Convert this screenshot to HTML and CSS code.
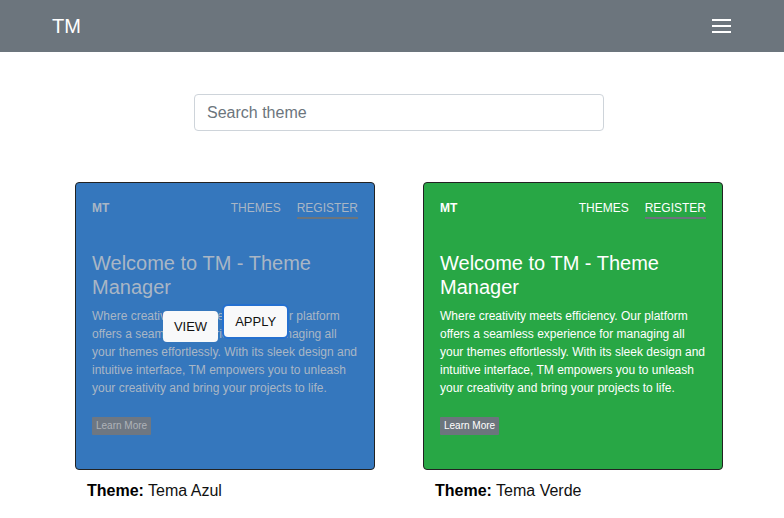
FILE: index.html
```html
<!DOCTYPE html>
<html lang="en">
<head>
<meta charset="utf-8">
<title>TM - Theme Manager</title>
<link rel="stylesheet" href="styles.css">
</head>
<body>
<header class="navbar">
  <a class="brand" href="#">TM</a>
  <button class="toggler" aria-label="Menu">
    <span></span><span></span><span></span>
  </button>
</header>

<main class="main">
  <div class="search-wrap">
    <input class="search" type="text" placeholder="Search theme">
  </div>

  <div class="themes">
    <div class="theme">
      <div class="card card-blue is-hover">
        <nav class="card-nav">
          <span class="card-brand">MT</span>
          <div class="card-links">
            <a href="#">THEMES</a>
            <a href="#" class="active">REGISTER</a>
          </div>
        </nav>
        <h2 class="card-title">Welcome to TM - Theme Manager</h2>
        <p class="card-text">Where creativity meets efficiency. Our platform offers a seamless experience for managing all your themes effortlessly. With its sleek design and intuitive interface, TM empowers you to unleash your creativity and bring your projects to life.</p>
        <a href="#" class="learn">Learn More</a>
        <div class="overlay">
          <button class="ov-btn">VIEW</button>
          <button class="ov-btn ov-focus">APPLY</button>
        </div>
      </div>
      <div class="theme-name"><strong>Theme:</strong> Tema Azul</div>
    </div>

    <div class="theme">
      <div class="card card-green">
        <nav class="card-nav">
          <span class="card-brand">MT</span>
          <div class="card-links">
            <a href="#">THEMES</a>
            <a href="#" class="active">REGISTER</a>
          </div>
        </nav>
        <h2 class="card-title">Welcome to TM - Theme Manager</h2>
        <p class="card-text">Where creativity meets efficiency. Our platform offers a seamless experience for managing all your themes effortlessly. With its sleek design and intuitive interface, TM empowers you to unleash your creativity and bring your projects to life.</p>
        <a href="#" class="learn">Learn More</a>
      </div>
      <div class="theme-name"><strong>Theme:</strong> Tema Verde</div>
    </div>
  </div>
</main>
</body>
</html>
```

FILE: styles.css
```css
* { box-sizing: border-box; }

html, body {
  margin: 0;
  padding: 0;
  background: #fff;
  font-family: "Liberation Sans", Arial, sans-serif;
  color: #212529;
}

.navbar {
  height: 52px;
  background: #6c757d;
  display: flex;
  align-items: center;
  justify-content: space-between;
  padding: 0 52px 0 52px;
}

.brand {
  color: #fff;
  text-decoration: none;
  font-size: 20px;
  line-height: 24px;
  margin-top: 0;
}

.toggler {
  background: none;
  border: 0;
  padding: 0;
  width: 20px;
  height: 14px;
  display: flex;
  flex-direction: column;
  justify-content: space-between;
  margin-top: 0;
}

.toggler span {
  display: block;
  width: 19px;
  height: 2px;
  background: #fff;
}

.main {
  width: 648px;
  margin-left: 75px;
  padding-top: 42px;
}

.search-wrap {
  padding-left: 119px;
}

.search {
  display: block;
  width: 410px;
  height: 37px;
  border: 1px solid #ced4da;
  border-radius: 4px;
  padding: 0 12px;
  font-family: "Liberation Sans", Arial, sans-serif;
  font-size: 16px;
  color: #495057;
  outline: none;
}

.search::placeholder {
  color: #6c757d;
}

.themes {
  display: flex;
  gap: 48px;
  margin-top: 51px;
}

.theme {
  width: 300px;
}

.card {
  position: relative;
  height: 288px;
  border: 1px solid #222;
  border-radius: 4px;
  padding: 16px 16px 0 16px;
  color: #fff;
}

.card-blue { background: #3577bd; }
.card-green { background: #28a745; }

.card-nav {
  display: flex;
  justify-content: space-between;
  align-items: flex-start;
  font-size: 12px;
  line-height: 18px;
}

.card-brand {
  font-weight: bold;
}

.card-links {
  display: flex;
  gap: 16px;
}

.card-links a {
  color: inherit;
  text-decoration: none;
}

.card-links a.active {
  border-bottom: 2px solid #6c757d;
}

.card-title {
  margin: 32px 0 0 0;
  font-size: 20px;
  line-height: 24px;
  font-weight: normal;
}

.card-text {
  margin: 8px 0 0 0;
  font-size: 12px;
  line-height: 18px;
}

.learn {
  display: inline-block;
  margin-top: 20px;
  background: #6c757d;
  color: #fff;
  font-size: 10px;
  line-height: 18px;
  padding: 0 4px;
  text-decoration: none;
  border-radius: 1px;
}

.is-hover .card-nav,
.is-hover .card-title,
.is-hover .card-text {
  color: #a9b6c5;
}

.is-hover .learn {
  color: #aeb3b9;
  background: #6e7782;
}

.overlay {
  position: absolute;
  inset: 0;
  display: flex;
  align-items: center;
  justify-content: center;
  gap: 6px;
}

.ov-btn {
  background: #f8f9fa;
  border: 0;
  border-radius: 4px;
  height: 31px;
  padding: 0 11px;
  font-family: "Liberation Sans", Arial, sans-serif;
  font-size: 13px;
  color: #111;
}

.ov-focus {
  transform: translateY(-5px);
  box-shadow: 0 0 0 2px #2470d0;
}

.theme-name {
  margin-top: 9px;
  padding-left: 12px;
  font-size: 16px;
  line-height: 24px;
  color: #111;
}

.theme-name strong {
  color: #000;
}
```
